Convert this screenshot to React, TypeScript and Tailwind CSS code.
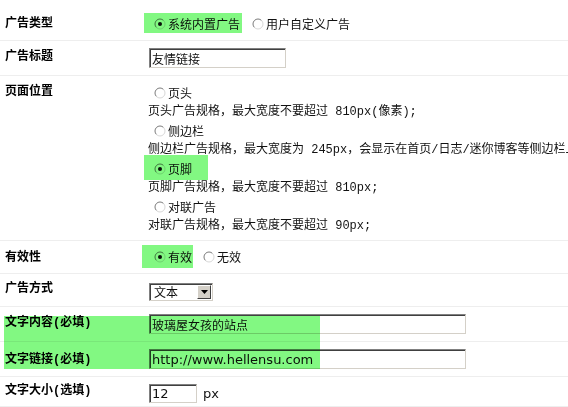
import React from "react";

const Radio = ({ checked = false }: { checked?: boolean }) => (
  <svg width="12" height="12" viewBox="0 0 12 12" className="shrink-0">
    <circle cx="6" cy="6" r="5" fill="white" />
    <path d="M2.46 9.54A5 5 0 0 1 9.54 2.46" fill="none" stroke="#7a7a7a" />
    <path d="M9.54 2.46A5 5 0 0 1 2.46 9.54" fill="none" stroke="#d8d8d8" />
    {checked && <circle cx="6" cy="6" r="2" fill="#111" />}
  </svg>
);

const Option = ({ label, checked, className = "" }: { label: string; checked?: boolean; className?: string }) => (
  <span className={`flex items-center ${className}`}>
    <Radio checked={checked} />
    <span className="ml-[2px] font-['Noto_Sans_CJK_SC',sans-serif]">{label}</span>
  </span>
);

const inset =
  "border border-[#808080] border-b-[#d4d0c8] border-r-[#d4d0c8] shadow-[inset_1px_1px_0_#404040] bg-white outline-none";

const Row = ({
  label,
  height,
  labelTop = "pt-[9px]",
  children,
}: {
  label: string;
  height: string;
  labelTop?: string;
  children?: React.ReactNode;
}) => (
  <div className={`flex border-b border-[#eeeeee] ${height}`}>
    <div className={`w-[148px] shrink-0 pl-[5px] font-bold leading-[14px] text-black ${labelTop}`}>{label}</div>
    <div className="flex-1 min-w-0">{children}</div>
  </div>
);

const Hl = ({ className }: { className: string }) => (
  <div className={`absolute bg-[#82f882] mix-blend-multiply pointer-events-none ${className}`} />
);

export default function App() {
  return (
    <div className="relative w-[568px] h-[407px] overflow-hidden bg-white text-[12px] text-[#111] font-['Liberation_Mono','Noto_Sans_CJK_SC',monospace]">
      <Row label="广告类型" height="h-[41px]" labelTop="pt-[17px]">
        <div className="flex items-center h-[14px] mt-[17px]">
          <Option label="系统内置广告" checked className="ml-[6px]" />
          <Option label="用户自定义广告" className="ml-[12px]" />
        </div>
      </Row>

      <Row label="广告标题" height="h-[35px]">
        <input
          readOnly
          defaultValue="友情链接"
          className={`${inset} mt-[7px] ml-[1px] block w-[137px] h-[20px] px-[2px] text-[12px] font-['Noto_Sans_CJK_SC',sans-serif]`}
        />
      </Row>

      <Row label="页面位置" height="h-[165px]">
        <div className="pt-[7px] flex flex-col whitespace-nowrap">
          <div className="h-[19px] flex items-center">
            <Option label="页头" className="ml-[6px]" />
          </div>
          <div className="h-[19px] flex items-center">页头广告规格，最大宽度不要超过 810px(像素);</div>
          <div className="h-[19px] flex items-center">
            <Option label="侧边栏" className="ml-[6px]" />
          </div>
          <div className="h-[19px] flex items-center">侧边栏广告规格，最大宽度为 245px，会显示在首页/日志/迷你博客等侧边栏上</div>
          <div className="h-[19px] flex items-center">
            <Option label="页脚" checked className="ml-[6px]" />
          </div>
          <div className="h-[19px] flex items-center">页脚广告规格，最大宽度不要超过 810px;</div>
          <div className="h-[19px] flex items-center">
            <Option label="对联广告" className="ml-[6px]" />
          </div>
          <div className="h-[19px] flex items-center">对联广告规格，最大宽度不要超过 90px;</div>
        </div>
      </Row>

      <Row label="有效性" height="h-[33px]" labelTop="pt-[10px]">
        <div className="flex items-center h-[14px] mt-[9px]">
          <Option label="有效" checked className="ml-[6px]" />
          <Option label="无效" className="ml-[11px]" />
        </div>
      </Row>

      <Row label="广告方式" height="h-[33px]" labelTop="pt-[8px]">
        <div className={`${inset} mt-[9px] ml-[1px] w-[64px] h-[18px] flex items-center justify-between pl-[4px] pr-[1px]`}>
          <span className="font-['Noto_Sans_CJK_SC',sans-serif] leading-[14px]">文本</span>
          <span className="w-[14px] h-[14px] bg-[#d4d0c8] border border-t-white border-l-white border-b-[#404040] border-r-[#404040] flex items-center justify-center">
            <svg width="7" height="4" viewBox="0 0 7 4">
              <path d="M0 0H7L3.5 4Z" fill="#000" />
            </svg>
          </span>
        </div>
      </Row>

      <Row label="文字内容(必填)" height="h-[35px]" labelTop="pt-[9px]">
        <input
          readOnly
          defaultValue="玻璃屋女孩的站点"
          className={`${inset} mt-[7px] ml-[1px] block w-[317px] h-[20px] px-[2px] text-[12px] font-['Noto_Sans_CJK_SC',sans-serif]`}
        />
      </Row>

      <Row label="文字链接(必填)" height="h-[35px]" labelTop="pt-[11px]">
        <input
          readOnly
          defaultValue="http://www.hellensu.com"
          className={`${inset} mt-[7px] ml-[1px] block w-[317px] h-[20px] px-[2px] text-[13px] font-['DejaVu_Sans',sans-serif]`}
        />
      </Row>

      <Row label="文字大小(选填)" height="h-[30px]" labelTop="pt-[7px]">
        <div className="flex items-center mt-[7px] ml-[1px]">
          <input
            readOnly
            defaultValue="12"
            className={`${inset} block w-[48px] h-[19px] px-[2px] text-[13px] font-['DejaVu_Sans',sans-serif]`}
          />
          <span className="ml-[6px] text-[13px] font-['DejaVu_Sans',sans-serif]">px</span>
        </div>
      </Row>

      <Hl className="left-[144px] top-[13px] w-[98px] h-[20px]" />
      <Hl className="left-[144px] top-[155px] w-[64px] h-[25px]" />
      <Hl className="left-[142px] top-[245px] w-[51px] h-[23px]" />
      <Hl className="left-[4px] top-[316px] w-[316px] h-[53px]" />
    </div>
  );
}
